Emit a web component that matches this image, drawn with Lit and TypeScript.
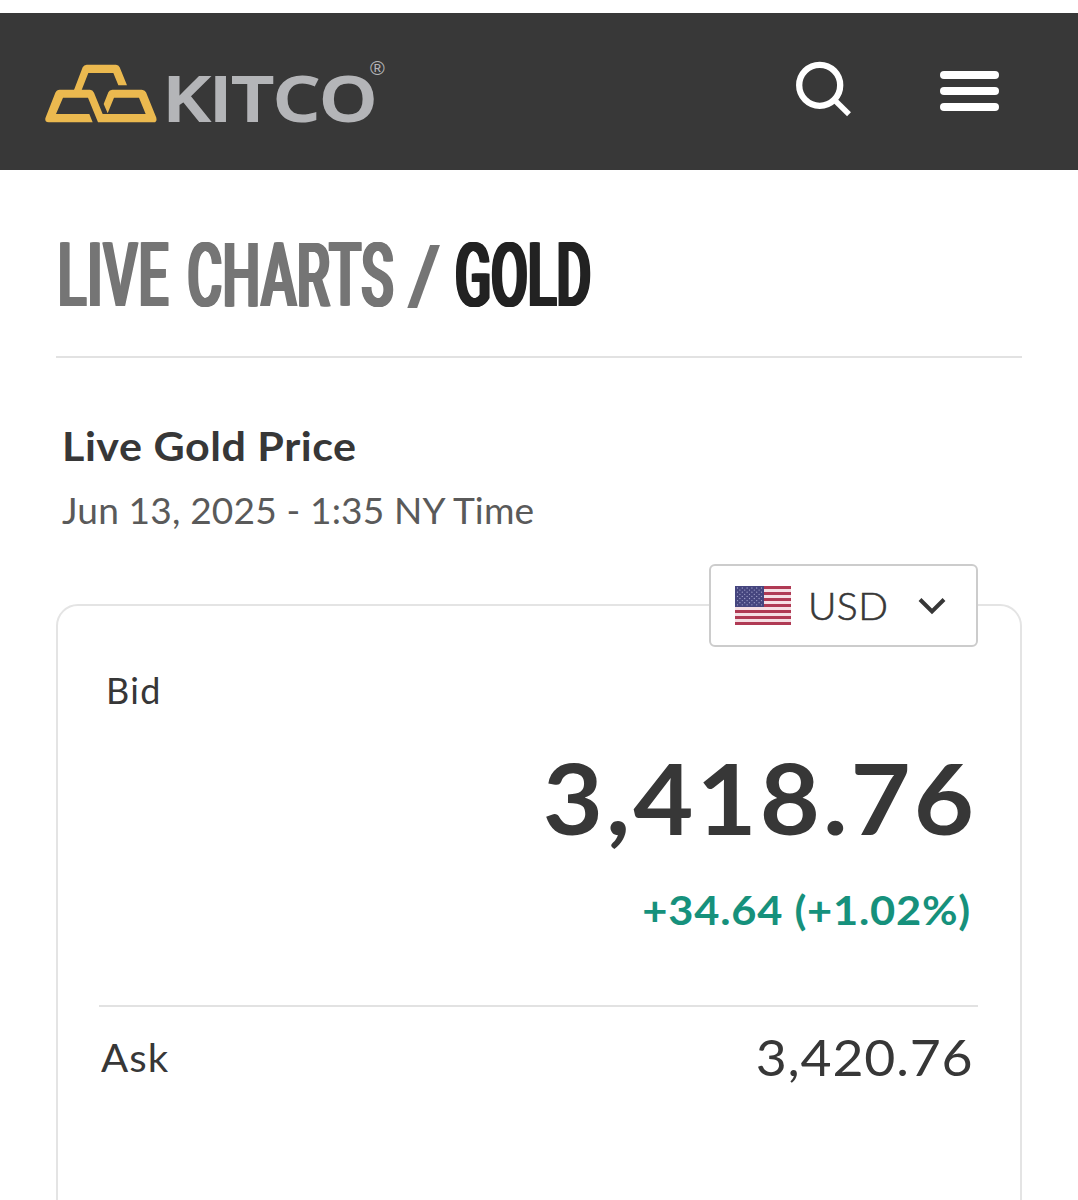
import { LitElement, html, svg, css } from "lit";
import { customElement } from "lit/decorators.js";

@customElement("site-header")
class SiteHeader extends LitElement {
  static styles = css`
    :host { display: block; }
    .bar { display: flex; align-items: flex-start; height: 156.5px; box-sizing: border-box; background: #383838; padding: 45px 79px 0 45px; }
    .logo { display: block; flex: none; overflow: visible; }
    .search { display: block; margin-left: auto; margin-right: 88px; flex: none; }
    .menu { display: flex; flex-direction: column; gap: 8px; padding-top: 13px; width: 59px; }
    .line { height: 8px; border-radius: 4px; background: #fff; }
    .word { font: 600 62px "Open Sans", "Noto Sans", sans-serif; fill: #b4b5b8; stroke: #b4b5b8; stroke-width: 1.8px; }
    .reg { font: 400 20px "Liberation Sans", sans-serif; fill: #b4b5b8; }
  `;
  render() {
    return html`<header class="bar">
      <svg class="logo" width="345" height="70" viewBox="45 58 345 70">
        <g transform="translate(30 50) scale(.33333)" fill="#ebb94f">
          <path d="M132 120 158 52Q162 44 170 44H258Q266 44 269 52L291 106H265L250 69H175L155 120Z" />
          <path d="M46 205 76 128Q80 119 89 119H180Q188 119 192 128L218 192H347L327 143H252L233 190L221 162L235 127Q238 119 247 119H335Q344 119 348 127L379 203Q382 217 370 217H204L174 143H99L78 192H178L188 217H56Q44 217 46 205Z" />
        </g>
        <text class="word" x="163" y="121" textLength="214" lengthAdjust="spacingAndGlyphs">KITCO</text>
        <text class="reg" x="370" y="75">®</text>
      </svg>
      <svg class="search" width="56" height="60" viewBox="796 58 56 60">
        <circle cx="819.7" cy="85.3" r="20.5" fill="none" stroke="#fff" stroke-width="6.3" />
        <path d="M834 99.5 849 114.3" stroke="#fff" stroke-width="5.5" />
      </svg>
      <div class="menu"><div class="line"></div><div class="line"></div><div class="line"></div></div>
    </header>`;
  }
}

@customElement("currency-select")
class CurrencySelect extends LitElement {
  static styles = css`
    :host { display: block; }
    .box { display: flex; align-items: center; width: 269px; height: 83px; box-sizing: border-box; border: 2px solid #ccc; border-radius: 6px; background: #fff; padding-left: 24px; }
    .flag { display: block; flex: none; }
    .code { font: 300 38px/48px Lato, sans-serif; -webkit-text-stroke: .6px #373737; letter-spacing: .4px; transform: scaleX(1.03); transform-origin: 0 0; color: #373737; margin: -2px 0 0 17px; width: 83px; }
    .arrow { display: block; margin-left: 27px; }
  `;
  render() {
    const stripes = Array.from({ length: 13 }, (_, i) => svg`<rect y=${i * 3} width="56" height="3" fill=${i % 2 ? "#f5dfe4" : "#b03a54"} />`);
    const stars = Array.from({ length: 9 }, (_, r) =>
      Array.from({ length: r % 2 ? 5 : 6 }, (_, c) => svg`<circle cx=${2.5 + c * 4.8 + (r % 2 ? 2.4 : 0)} cy=${2 + r * 2.1} r=".65" fill="#a3a3cb" />`));
    return html`<div class="box">
      <svg class="flag" width="56" height="39" viewBox="0 0 56 39">${stripes}<rect width="29" height="21" fill="#45457e" />${stars}</svg>
      <span class="code">USD</span>
      <svg class="arrow" width="28" height="18" viewBox="0 0 28 18"><path d="M2 2.5 14 14.5 26 2.5" fill="none" stroke="#373737" stroke-width="4" /></svg>
    </div>`;
  }
}

@customElement("app-root")
class AppRoot extends LitElement {
  static styles = css`
    :host { display: block; height: 1200px; overflow: hidden; background: #fff; padding-top: 13px; box-sizing: border-box; font-family: Lato, sans-serif; color: #373737; }
    .page { padding: 0 56px; }
    .crumb { height: 188px; box-sizing: border-box; border-bottom: 2px solid #e2e2e2; padding-top: 53.5px; }
    .title { display: flex; width: 940px; padding-left: 3px; transform: scaleX(.6); transform-origin: 0 0; font: 500 88.5px/106px Roboto, sans-serif; color: #757575; text-shadow: 1.3px 0, 2.6px 0, -1.3px 0, -2.6px 0; white-space: nowrap; }
    .live { width: 216px; flex: none; letter-spacing: 1.5px; }
    .charts { width: 368px; flex: none; letter-spacing: .8px; }
    .slash { width: 78px; flex: none; }
    .slash span { display: inline-block; transform: translateY(-1px) scale(1.55, .92); transform-origin: 0 50%; text-shadow: 1.5px 0, -1px 0; }
    .now { color: #222; text-shadow: 1.5px 0, 3px 0, -1.5px 0, -3px 0; }
    .intro { padding: 62px 0 0 6px; }
    .name, .date, .bid, .label { transform-origin: 0 50%; }
    .price, .change, .value { transform-origin: 100% 50%; }
    .name { margin: 0; font-size: 41px; line-height: 52px; font-weight: 700; white-space: nowrap; letter-spacing: .5px; transform: scaleX(1.05); }
    .date { margin-top: 12px; font-size: 36px; line-height: 52px; color: #5a5a5a; white-space: nowrap; letter-spacing: .15px; transform: scaleX(1.03); }
    .card { position: relative; margin-top: 68.5px; height: 700px; box-sizing: border-box; border: 2px solid #e4e4e4; border-radius: 22px; padding: 59px 42px 0 41px; }
    .select { position: absolute; right: 42px; top: -42px; }
    .bid { font-size: 36px; line-height: 50px; padding-left: 7px; letter-spacing: 1.3px; }
    .price { text-align: right; font-size: 98px; line-height: 110px; font-weight: 700; margin: 27px 1px 0 0; letter-spacing: 2.8px; transform: scaleX(1.06); }
    .change { text-align: right; font-size: 41px; line-height: 50px; font-weight: 700; color: #16917c; margin-top: 33px; padding-right: 0; margin-right: 7px; letter-spacing: .7px; transform: scaleX(1.06); }
    .ask { display: flex; justify-content: space-between; align-items: center; border-top: 2px solid #e2e2e2; margin-top: 70px; padding: 18px 5px 0 2px; }
    .label { font-size: 38px; line-height: 64px; letter-spacing: 1px; transform: scaleX(1.06); }
    .value { font-size: 51px; line-height: 64px; letter-spacing: .8px; transform: scaleX(1.05); }
  `;
  render() {
    return html`<site-header></site-header>
      <main class="page">
        <div class="crumb">
          <div class="title"><span class="live">LIVE</span><span class="charts">CHARTS</span><span class="slash"><span>/</span></span><span class="now">GOLD</span></div>
        </div>
        <section class="intro">
          <h1 class="name">Live Gold Price</h1>
          <div class="date">Jun 13, 2025 - 1:35 NY Time</div>
        </section>
        <section class="card">
          <currency-select class="select"></currency-select>
          <div class="bid">Bid</div>
          <div class="price">3,418.76</div>
          <div class="change">+34.64 (+1.02%)</div>
          <div class="ask"><span class="label">Ask</span><span class="value">3,420.76</span></div>
        </section>
      </main>`;
  }
}
